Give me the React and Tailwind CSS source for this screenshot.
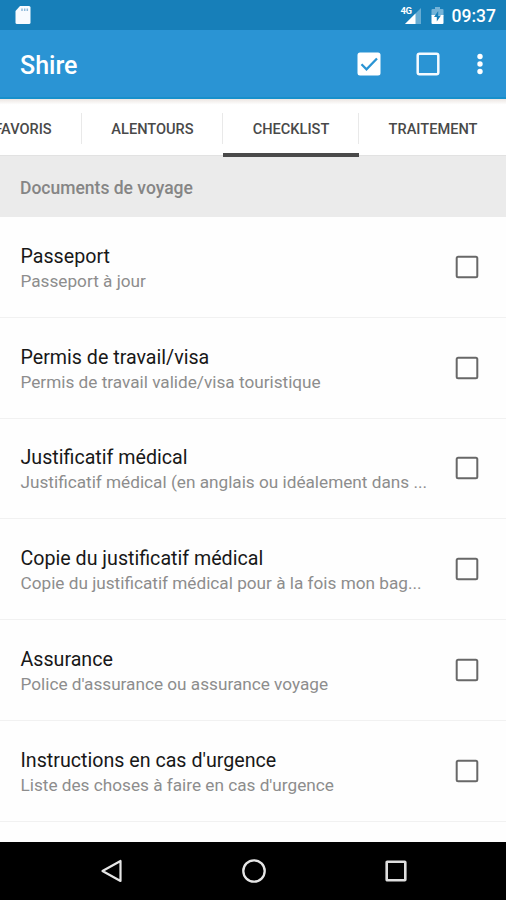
const TABS = [
  { label: 'FAVORIS', width: 'w-[122px] pl-[4px]' },
  { label: 'ALENTOURS', width: 'w-[141px]' },
  { label: 'CHECKLIST', width: 'w-[136px]', active: true },
  { label: 'TRAITEMENT', width: 'w-[148px]' },
];

const ITEMS = [
  { title: 'Passeport', detail: 'Passeport à jour' },
  { title: 'Permis de travail/visa', detail: 'Permis de travail valide/visa touristique' },
  { title: 'Justificatif médical', detail: 'Justificatif médical (en anglais ou idéalement dans ...' },
  { title: 'Copie du justificatif médical', detail: 'Copie du justificatif médical pour à la fois mon bag...' },
  { title: 'Assurance', detail: "Police d'assurance ou assurance voyage" },
  { title: "Instructions en cas d'urgence", detail: "Liste des choses à faire en cas d'urgence" },
];

function StatusBar() {
  return (
    <div className="flex h-[30px] shrink-0 items-center bg-[#177fb9] pr-[10px] pl-[14px] text-white">
      <svg width="17" height="20" viewBox="0 0 17 20">
        <path d="M6 1h9a1.500 1.500 0 0 1 1.500 1.500v15A1.500 1.500 0 0 1 15 19H3a1.500 1.500 0 0 1-1.500-1.500V6z" fill="#f8fbff" />
        <path d="M8 3.500v2.500M10.700 3.500v2.500M13.300 3.500v2.500" stroke="#8fb9da" strokeWidth="1.500" />
      </svg>
      <div className="ml-auto flex items-center">
        <div className="relative mr-[10px] h-5 w-[20px]">
          <svg width="20" height="20" viewBox="0 0 20 20">
            <path d="M20 3v16H4z" fill="#67acd3" />
            <path d="M14.500 8.500V19H4z" fill="#fff" />
          </svg>
          <span className="absolute top-0 left-0 text-[9.500px] leading-[11px] font-bold tracking-[-0.5px]">4G</span>
        </div>
        <svg width="13" height="19" viewBox="0 0 13 19" className="mr-[8px]">
          <path d="M4 1h5v2h2.500q1 0 1 1v6H.500V4q0-1 1-1H4z" fill="#74b3d8" />
          <path d="M.500 9h12v8q0 1-1 1h-10q-1 0-1-1z" fill="#fff" />
          <path d="M7.200 5 3 11h2.800v4.500L10 9.500H7.200z" fill="#177fb9" />
        </svg>
        <span className="mt-[2px] text-[17.500px] leading-6 font-medium">09:37</span>
      </div>
    </div>
  );
}

function AppBar() {
  return (
    <div className="flex h-[69px] shrink-0 items-center border-b-2 border-[#1790cb] bg-[#2a94d4] px-[20px]">
      <h1 className="mt-[5px] text-[25px] leading-8 font-medium text-white">Shire</h1>
      <div className="ml-auto flex items-center pr-[3px]">
        <svg width="24" height="24" viewBox="0 0 24 24" className="mr-[35px]">
          <rect x=".5" y=".5" width="23" height="23" rx="2.500" fill="#fff" />
          <path d="m4.500 12.300 5 5L20 6.500" fill="none" stroke="#2a94d4" strokeWidth="2.300" />
        </svg>
        <svg width="24" height="24" viewBox="0 0 24 24" className="mr-[37px]">
          <rect x="1.700" y="1.700" width="20.600" height="20.600" rx="1.800" fill="none" stroke="#f4faff" strokeWidth="2.500" />
        </svg>
        <svg width="6" height="22" viewBox="0 0 6 22" className="mt-px">
          <circle cx="3" cy="3.500" r="2.700" fill="#fff" />
          <circle cx="3" cy="11" r="2.700" fill="#fff" />
          <circle cx="3" cy="18.500" r="2.700" fill="#fff" />
        </svg>
      </div>
    </div>
  );
}

function TabBar() {
  return (
    <div className="h-[57px] shrink-0 border-b border-[#e2e2e2] bg-gradient-to-b from-[#ece6e2] via-white via-[10%] to-white">
      <div className="-ml-10 flex h-full w-[547px]">
        {TABS.map((tab) => (
          <div key={tab.label} className={`relative flex h-full shrink-0 items-center justify-center pt-[3px] ${tab.width}`}>
            <span className="text-[14.600px] leading-5 font-medium text-[#494949]">{tab.label}</span>
            <span className="absolute top-[14px] right-0 h-[31px] w-px bg-[#e9e9e9]" />
            {tab.active && <span className="absolute inset-x-0 bottom-[-2px] z-10 h-1 bg-[#4a4a4a]" />}
          </div>
        ))}
      </div>
    </div>
  );
}

function ChecklistRow({ item }) {
  return (
    <div className="flex h-[100.800px] shrink-0 items-center border-b border-[#f1f1f1] pr-[27px] pl-[20.500px]">
      <div className="flex flex-col pt-[4px] whitespace-nowrap">
        <span className="text-[19.650px] leading-6 text-[#181818]">{item.title}</span>
        <span className="text-[17.200px] leading-6 text-[#8d8d8d]">{item.detail}</span>
      </div>
      <svg width="24" height="24" viewBox="0 0 24 24" className="ml-auto shrink-0">
        <rect x="1.700" y="1.700" width="20.600" height="20.600" rx="1.500" fill="none" stroke="#686868" strokeWidth="2" />
      </svg>
    </div>
  );
}

function NavBar() {
  return (
    <div className="flex h-[58px] shrink-0 items-center justify-center gap-[117px] bg-black pl-px">
      <svg width="24" height="26" viewBox="0 0 24 26">
        <path d="M20.500 3v20L2.500 13z" fill="none" stroke="#e6e6e6" strokeWidth="2.200" strokeLinejoin="round" />
      </svg>
      <svg width="26" height="26" viewBox="0 0 26 26">
        <circle cx="13" cy="13" r="10.700" fill="none" stroke="#e6e6e6" strokeWidth="2.300" />
      </svg>
      <svg width="24" height="24" viewBox="0 0 24 24">
        <rect x="2.700" y="2.700" width="18.600" height="18.600" rx=".5" fill="none" stroke="#dedede" strokeWidth="2.600" />
      </svg>
    </div>
  );
}

export default function App() {
  return (
    <div className="flex h-[900px] w-[506px] flex-col overflow-hidden bg-[#fefefe] font-[Roboto,sans-serif]">
      <StatusBar />
      <AppBar />
      <TabBar />
      <div className="flex h-[61px] shrink-0 items-center bg-[#ebebeb] pl-[20px]">
        <h2 className="pt-[3px] text-[17.500px] leading-6 font-medium text-[#858585]">Documents de voyage</h2>
      </div>
      <div className="flex min-h-0 flex-1 flex-col overflow-hidden">
        {ITEMS.map((item) => (
          <ChecklistRow key={item.title} item={item} />
        ))}
      </div>
      <NavBar />
    </div>
  );
}
